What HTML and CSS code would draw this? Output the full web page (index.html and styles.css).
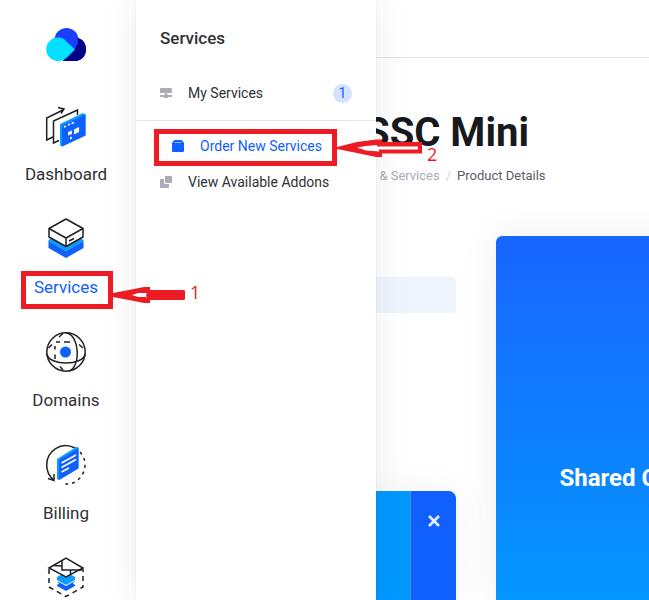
FILE: index.html
```html
<!DOCTYPE html>
<html lang="en">
  <head>
    <meta charset="UTF-8" />
    <meta name="viewport" content="width=device-width, initial-scale=1.0" />
    <title>Product Details</title>
    <link rel="stylesheet" href="styles.css">
  </head>
  <body>
    <div class="app">
      <!-- Main navigation -->
      <nav class="sidebar" aria-label="Main">
        <a class="logo" href="#" aria-label="Home">
          <svg width="40" height="34" viewBox="0 0 40 34">
            <path d="M17 33 30 10C36 10 40 15 40 21.500C40 28 35 33 29 33Z" fill="#06008c" />
            <circle cx="20.500" cy="12" r="12" fill="#1a40ff" />
            <path d="M29 21.500 32 15 31.500 10C36.500 11 40 15 40 21.500C40 28 35 33 29 33H17Z" fill="#06008c" />
            <path d="M12 9.500C17 9.500 19 12 21 14L29 21.500 21 29.500C18 32 16 33 12 33A11.750 11.750 0 0 1 12 9.500Z" fill="#00e0ff" />
          </svg>
        </a>

        <a class="nav-item" href="#">
          <svg class="nav-icon" viewBox="0 0 40 40" fill="none" stroke="#202124" stroke-width="1.500">
            <path d="M7 31 .7 34V12L18 3.500M12 1.500 18 3 15 7.500M13 34.500 7.500 37V15L31.500 4V9" />
            <path d="M14 18 37 7 39.500 8.500V29.500L16 40.500 14 39Z" fill="#0a9dff" stroke="none" />
            <path d="M16 19.500 39.500 8.500V29.500L16 40.500Z" fill="#1060ff" stroke="none" />
            <path d="M18 21 20 20M22 19 24 18M25.500 17.500 28 16.500" stroke="#fff" />
            <path d="M28 23.500 33 21V26L28 28.500ZM22 26 26 24.500V28L22 29.500ZM24 31.500 26 30.500V32.500L24 33.500Z" fill="#fff" stroke="none" />
          </svg>
          <span>Dashboard</span>
        </a>

        <a class="nav-item active" href="#">
          <svg class="nav-icon" viewBox="0 0 40 40" fill="none" stroke="#202124" stroke-width="1.500" stroke-linejoin="round">
            <path d="M2.500 22 20 32 37.500 22V29L20 39 2.500 29Z" fill="#1060ff" stroke="none" />
            <path d="M2.500 21 20 12 37.500 21V22.500L20 32 2.500 22.500Z" fill="#0a9dff" stroke="none" />
            <path d="M3 9.500 20 0 37 9.500V18L20 27.500 3 18Z" fill="#fff" />
            <path d="M3 9.500 20 19 37 9.500M20 19V27.500M23 22 28 19.500" />
          </svg>
          <span>Services</span>
        </a>

        <a class="nav-item" href="#">
          <svg class="nav-icon" viewBox="0 0 40 40" fill="none" stroke="#202124" stroke-width="1.500">
            <circle cx="20" cy="20" r="19.200" />
            <path d="M20 .8C34 3 35 35 23 39M.8 22C3 34 37 34 39.200 22" />
            <path d="M17 1.500 13 5M9 14V27M14 34.500 17 38M2.500 16 6 12.500M10 10H24M33 12.500 37 16" />
            <path d="M10 17.500H8V22.500H10Z" fill="#fff" stroke="none" />
            <path d="M14 9V11H18V9Z" fill="#fff" stroke="none" />
            <circle cx="19.500" cy="20" r="5.500" fill="#1060ff" stroke="none" />
          </svg>
          <span>Domains</span>
        </a>

        <a class="nav-item" href="#">
          <svg class="nav-icon" viewBox="0 0 40 40" fill="none" stroke="#202124" stroke-width="1.500">
            <path d="M29 3C15-4 .7 6 .7 20C.7 26 3 31 7.500 35M2 33.500 8 35.500V29" />
            <path d="M34 7C43 17 39 31 29 37C25 39 21 39.500 15 38.500" stroke-dasharray="3 4" />
            <path d="M11 14 31 1.500 32.500 3V23L13 35 11 34Z" fill="#0a9dff" stroke="none" />
            <path d="M13 15 32.500 3V23.500L13 35Z" fill="#1060ff" stroke="none" />
            <path d="M15.500 18 30 10M15.500 22.500 30 14.500M15.500 27 23 23" stroke="#fff" />
          </svg>
          <span>Billing</span>
        </a>

        <a class="nav-item" href="#" aria-label="Support">
          <svg class="nav-icon" viewBox="0 0 40 40" fill="none" stroke="#202124" stroke-width="1.500">
            <path d="M11 23 20 28 29 23 27 25.500 29 27V28L20 33 11 28V27L13 25.500Z" fill="#1060ff" stroke="none" />
            <path d="M11 19 20 14 29 19V22L20 27 11 22Z" fill="#0a9dff" stroke="none" />
            <path d="M3 10 20 0 37 10 20 19Z" fill="#fff" />
            <path d="M16 2V12H36M8 7.500 16 8M24.500 12V17" />
            <path d="M3 11V29L20 38.500 37 29V11" stroke-dasharray="5 4" />
          </svg>
        </a>
      </nav>

      <!-- Services flyout -->
      <aside class="flyout">
        <h2>Services</h2>
        <a class="flyout-link" href="#">
          <svg width="12" height="12" viewBox="0 0 12 12" fill="#acacb8">
            <path d="M1 1H11Q12 1 12 2V5Q12 6 11 6H1Q0 6 0 5V2Q0 1 1 1ZM5 6H7V7.500H8V8H12V10H8V11H4V10H0V8H4V7.500H5Z" />
          </svg>
          <span>My Services</span>
          <span class="count">1</span>
        </a>
        <hr />
        <a class="flyout-link current" href="#">
          <svg width="12" height="12" viewBox="0 0 12 12" fill="#1060ff">
            <path d="M3 0H9Q10 0 10.500 1L12 3V11Q12 12 11 12H1Q0 12 0 11V3L1.500 1Q2 0 3 0Z" />
            <path d="M2.500 2.500H9.500" stroke="#8bb0ff" />
          </svg>
          <span>Order New Services</span>
        </a>
        <a class="flyout-link" href="#">
          <svg width="12" height="12" viewBox="0 0 12 12" fill="#acacb8">
            <path d="M6 0H11Q12 0 12 1V6Q12 7 11 7H6Q5 7 5 6V1Q5 0 6 0ZM1 3H4V8H9V11Q9 12 8 12H1Q0 12 0 11V4Q0 3 1 3Z" />
          </svg>
          <span>View Available Addons</span>
        </a>
      </aside>

      <!-- Page -->
      <main class="main">
        <div class="topbar"></div>
        <header class="page-head">
          <h1>SSC Mini</h1>
          <div class="breadcrumb">
            <a href="#">Products &amp; Services</a>
            <span class="sep">/</span>
            <span>Product Details</span>
          </div>
        </header>
        <div class="columns">
          <div class="side">
            <div class="side-current"></div>
            <div class="promo">
              <div class="promo-body"></div>
              <button class="promo-close" type="button" aria-label="Close">
                <svg width="12" height="12" viewBox="0 0 12 12" stroke="#e9efff" stroke-width="2.500">
                  <path d="M1 1 11 11M11 1 1 11" />
                </svg>
              </button>
            </div>
          </div>
          <section class="product">
            <h3>Shared Cloud Hosting</h3>
          </section>
        </div>
      </main>
    </div>

    <!-- Step markers -->
    <svg class="steps" width="649" height="600" viewBox="0 0 649 600">
      <g fill="none" stroke="#ed1c24" stroke-width="5">
        <rect x="23.500" y="273.500" width="87" height="33" />
        <rect x="156.500" y="131.500" width="178" height="32" />
      </g>
      <g fill="#ed1c24">
        <path d="M113 293 134 289 144 287H150V290H184L185 291V299L184 300H150V303H144L134 301 113 297Z" />
        <path d="M337 147 357 142 376 139.500H382V142H422V153.500H382V157H376L357 153 337 149Z" />
      </g>
      <path d="M357 147.500 366 146 377 145V146.500H418V149.500H379V151.500L366 150.500Z" fill="#fff" />
      <path d="M132 295 138 293H147L146 295 147 299V297H138Z" fill="#fff" />
      <text x="190" y="299">1</text>
      <text x="427" y="161">2</text>
    </svg>
  </body>
</html>
```

FILE: styles.css
```css
:root {
  --blue: #1060ff;
  --sky: #0098ff;
  --text: #303134;
  --muted: #acacb8;
  --line: #e6e6e9;
}

* {
  box-sizing: border-box;
}

body {
  margin: 0;
  font-family: Roboto, sans-serif;
  font-size: 14px;
  color: var(--text);
  background: #fff;
}

a {
  color: inherit;
  text-decoration: none;
}

.app {
  position: relative;
  display: flex;
  height: 100vh;
  overflow: hidden;
}

/* Sidebar */
.sidebar {
  flex: 0 0 136px;
  width: 136px;
  padding: 28px 4px 0 0;
  display: flex;
  flex-direction: column;
  align-items: center;
}

.logo {
  height: 34px;
  margin-bottom: 44px;
}

.logo svg,
.nav-icon {
  display: block;
}

.nav-item {
  flex: none;
  height: 113px;
  display: flex;
  flex-direction: column;
  align-items: center;
  gap: 18px;
  font-size: 17px;
  line-height: 20px;
}

.nav-item.active {
  color: var(--blue);
}

.nav-icon {
  width: 40px;
  height: 40px;
  overflow: visible;
}

/* Flyout */
.flyout {
  position: absolute;
  top: 0;
  bottom: 0;
  left: 136px;
  width: 240px;
  padding-top: 28px;
  background: #fff;
  box-shadow: 0 0 1px rgba(0, 0, 0, 0.2), 0 0 40px rgba(0, 0, 0, 0.07);
  z-index: 2;
}

.flyout h2 {
  margin: 0 24px 27px;
  font-size: 17px;
  font-weight: 500;
  line-height: 20px;
}

.flyout-link {
  display: flex;
  align-items: center;
  gap: 16px;
  height: 36px;
  padding: 0 24px;
}

.flyout-link.current {
  padding-left: 36px;
  color: var(--blue);
}

.flyout hr {
  margin: 9px 0 7px;
  border: 0;
  border-top: 1px solid var(--line);
}

.count {
  margin-left: auto;
  width: 19px;
  height: 19px;
  border-radius: 50%;
  line-height: 19px;
  text-align: center;
  color: var(--blue);
  background: #d5e2ff;
}

/* Page */
.main {
  flex: 1;
  min-width: 0;
  overflow: hidden;
  display: flex;
  flex-direction: column;
}

.topbar {
  flex: none;
  height: 58px;
  border-bottom: 1px solid var(--line);
}

.page-head {
  height: 178px;
  padding: 51px 0 0 188px;
}

.page-head h1 {
  margin: 0 0 10px 41px;
  font-size: 40px;
  line-height: 48px;
  color: #17191d;
}

.breadcrumb {
  display: flex;
  gap: 6px;
  font-size: 13px;
  line-height: 18px;
  color: #5c5c68;
}

.breadcrumb a {
  color: var(--muted);
}

.breadcrumb .sep {
  color: #d0d0d8;
}

.columns {
  flex: 1;
  padding-left: 40px;
  display: grid;
  grid-template-columns: 280px minmax(362px, 1fr);
  gap: 40px;
}

.side {
  display: flex;
  flex-direction: column;
  padding-top: 41px;
}

.side-current {
  height: 36px;
  border-radius: 4px;
  background: #eff4ff;
}

.promo {
  flex: 1;
  margin-top: 178px;
  display: flex;
  border-radius: 8px 8px 0 0;
  overflow: hidden;
  background: var(--sky);
  box-shadow: 0 0 40px rgba(0, 0, 0, 0.05);
}

.promo-body {
  flex: 1;
}

.promo-close {
  width: 46px;
  padding: 24px 0 0;
  display: flex;
  justify-content: center;
  align-items: flex-start;
  border: 0;
  border-left: 1px solid #4c93ff;
  background: var(--blue);
  cursor: pointer;
}

.product {
  border-radius: 6px 6px 0 0;
  background: linear-gradient(#1965ff, #0496ff);
  box-shadow: 0 0 40px rgba(0, 0, 0, 0.07);
  text-align: center;
  color: #fff;
}

.product h3 {
  margin: 227px 0 0;
  font-size: 24px;
  line-height: 30px;
  white-space: nowrap;
}

/* Step markers */
.steps {
  position: absolute;
  top: 0;
  left: 0;
  z-index: 3;
  pointer-events: none;
}

.steps text {
  font-family: "Open Sans", sans-serif;
  font-size: 18px;
  fill: #ed1c24;
}
```
